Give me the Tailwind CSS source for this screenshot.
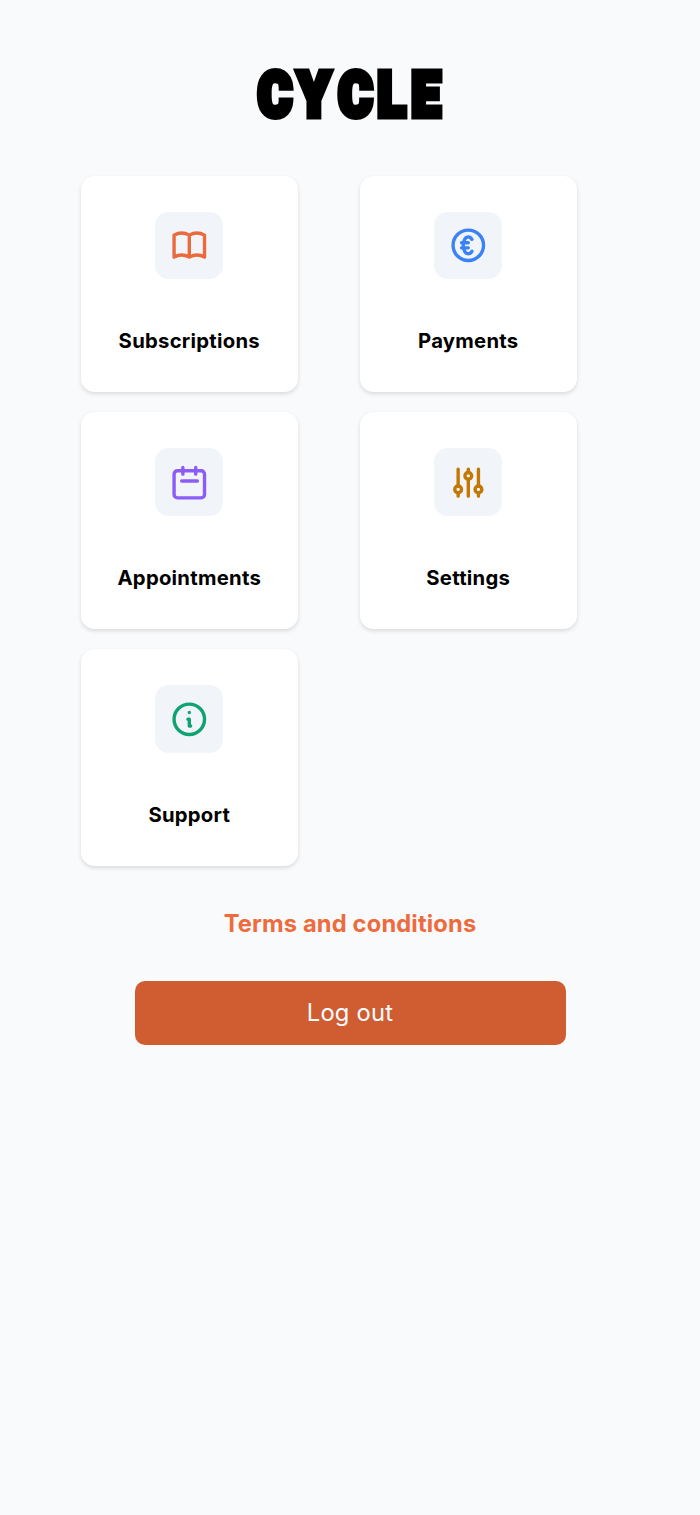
<!DOCTYPE html>
<html lang="en">
<head>
  <meta charset="UTF-8">
  <title>Cycle</title>
  <script src="https://cdn.jsdelivr.net/npm/@tailwindcss/browser@4"></script>
</head>
<body class="bg-[#f9fafc] min-h-screen font-['Inter',sans-serif] text-black">
  <main class="flex flex-col items-center pt-[69px]">
    <h1>
      <svg class="block h-[52px] w-[188px] overflow-visible font-['Roboto',sans-serif] font-black" viewBox="0 0 188 52" fill="#000" stroke="#000" stroke-width="7">
        <text x="2.4 49.2 97 143 183" y="47.2" font-size="60.5" transform="scale(0.85 1)">CYCLE</text>
      </svg>
    </h1>

    <div class="mt-[54.8px] mr-[42.5px] grid grid-cols-[216.5px_216.5px] gap-x-[62.5px] gap-y-[20.2px] text-[20.3px] leading-[27px] font-bold tracking-[0.25px]">
      <a class="flex h-[216.5px] flex-col items-center rounded-[13.5px] bg-white pt-9 shadow-[0_2px_4px_rgba(0,0,0,0.13)]">
        <span class="flex size-[67.6px] items-center justify-center rounded-[13.5px] bg-[#f1f5f9] text-[#ea6a3b]">
          <svg class="size-[40.6px]" viewBox="0 0 24 24" fill="none" stroke="currentColor" stroke-width="2" stroke-linecap="round" stroke-linejoin="round">
            <path d="M3 19a9 9 0 0 1 9 0a9 9 0 0 1 9 0M3 6a9 9 0 0 1 9 0a9 9 0 0 1 9 0M3 6v13M12 6v13M21 6v13"/>
          </svg>
        </span>
        <span class="mt-12">Subscriptions</span>
      </a>

      <a class="flex h-[216.5px] flex-col items-center rounded-[13.5px] bg-white pt-9 shadow-[0_2px_4px_rgba(0,0,0,0.13)]">
        <span class="flex size-[67.6px] items-center justify-center rounded-[13.5px] bg-[#f1f5f9] text-[#3b82f6]">
          <svg class="size-[40.6px]" viewBox="0 0 24 24" fill="none" stroke="currentColor" stroke-width="2" stroke-linecap="round" stroke-linejoin="round">
            <path d="M14.121 15.536c-1.171 1.952-3.07 1.952-4.242 0-1.172-1.953-1.172-5.119 0-7.072 1.171-1.952 3.07-1.952 4.242 0M8 10.5h4m-4 3h4m9-1.5a9 9 0 11-18 0 9 9 0 0118 0z"/>
          </svg>
        </span>
        <span class="mt-12">Payments</span>
      </a>

      <a class="flex h-[216.5px] flex-col items-center rounded-[13.5px] bg-white pt-9 shadow-[0_2px_4px_rgba(0,0,0,0.13)]">
        <span class="flex size-[67.6px] items-center justify-center rounded-[13.5px] bg-[#f1f5f9] text-[#8b5cf6]">
          <svg class="size-[40.6px]" viewBox="0 0 24 24" fill="none" stroke="currentColor" stroke-width="2" stroke-linecap="round" stroke-linejoin="round">
            <rect x="3" y="5.2" width="18" height="16" rx="2"/>
            <path d="M8.2 3.2v4M15.8 3.2v4M7.5 11.2h9.3"/>
          </svg>
        </span>
        <span class="mt-12">Appointments</span>
      </a>

      <a class="flex h-[216.5px] flex-col items-center rounded-[13.5px] bg-white pt-9 shadow-[0_2px_4px_rgba(0,0,0,0.13)]">
        <span class="flex size-[67.6px] items-center justify-center rounded-[13.5px] bg-[#f1f5f9] text-[#c27803]">
          <svg class="size-[40.6px]" viewBox="0 0 24 24" fill="none" stroke="currentColor" stroke-width="2" stroke-linecap="round" stroke-linejoin="round">
            <circle cx="6" cy="16.2" r="2"/>
            <circle cx="12" cy="8.2" r="2"/>
            <circle cx="18" cy="16.2" r="2"/>
            <path d="M6 4.2v10M6 18.2v2M12 4.2v2M12 10.2v10M18 4.2v10M18 18.2v2"/>
          </svg>
        </span>
        <span class="mt-12">Settings</span>
      </a>

      <a class="flex h-[216.5px] flex-col items-center rounded-[13.5px] bg-white pt-9 shadow-[0_2px_4px_rgba(0,0,0,0.13)]">
        <span class="flex size-[67.6px] items-center justify-center rounded-[13.5px] bg-[#f1f5f9] text-[#0ea371]">
          <svg class="size-[40.6px]" viewBox="0 0 24 24" fill="none" stroke="currentColor" stroke-width="2" stroke-linecap="round" stroke-linejoin="round">
            <circle cx="12" cy="12" r="9"/>
            <path d="M12 8h.01M11.2 12h.8v4h.8"/>
          </svg>
        </span>
        <span class="mt-12">Support</span>
      </a>
    </div>

    <a class="mt-[40.9px] text-[23.7px] leading-[34px] font-bold tracking-[0.15px] text-[#ed6b3c]">Terms and conditions</a>

    <button class="mt-10 h-[64.5px] w-[431px] rounded-[10px] bg-[#d05c31] text-[23.7px] tracking-[0.25px] text-white">Log out</button>
  </main>
</body>
</html>
